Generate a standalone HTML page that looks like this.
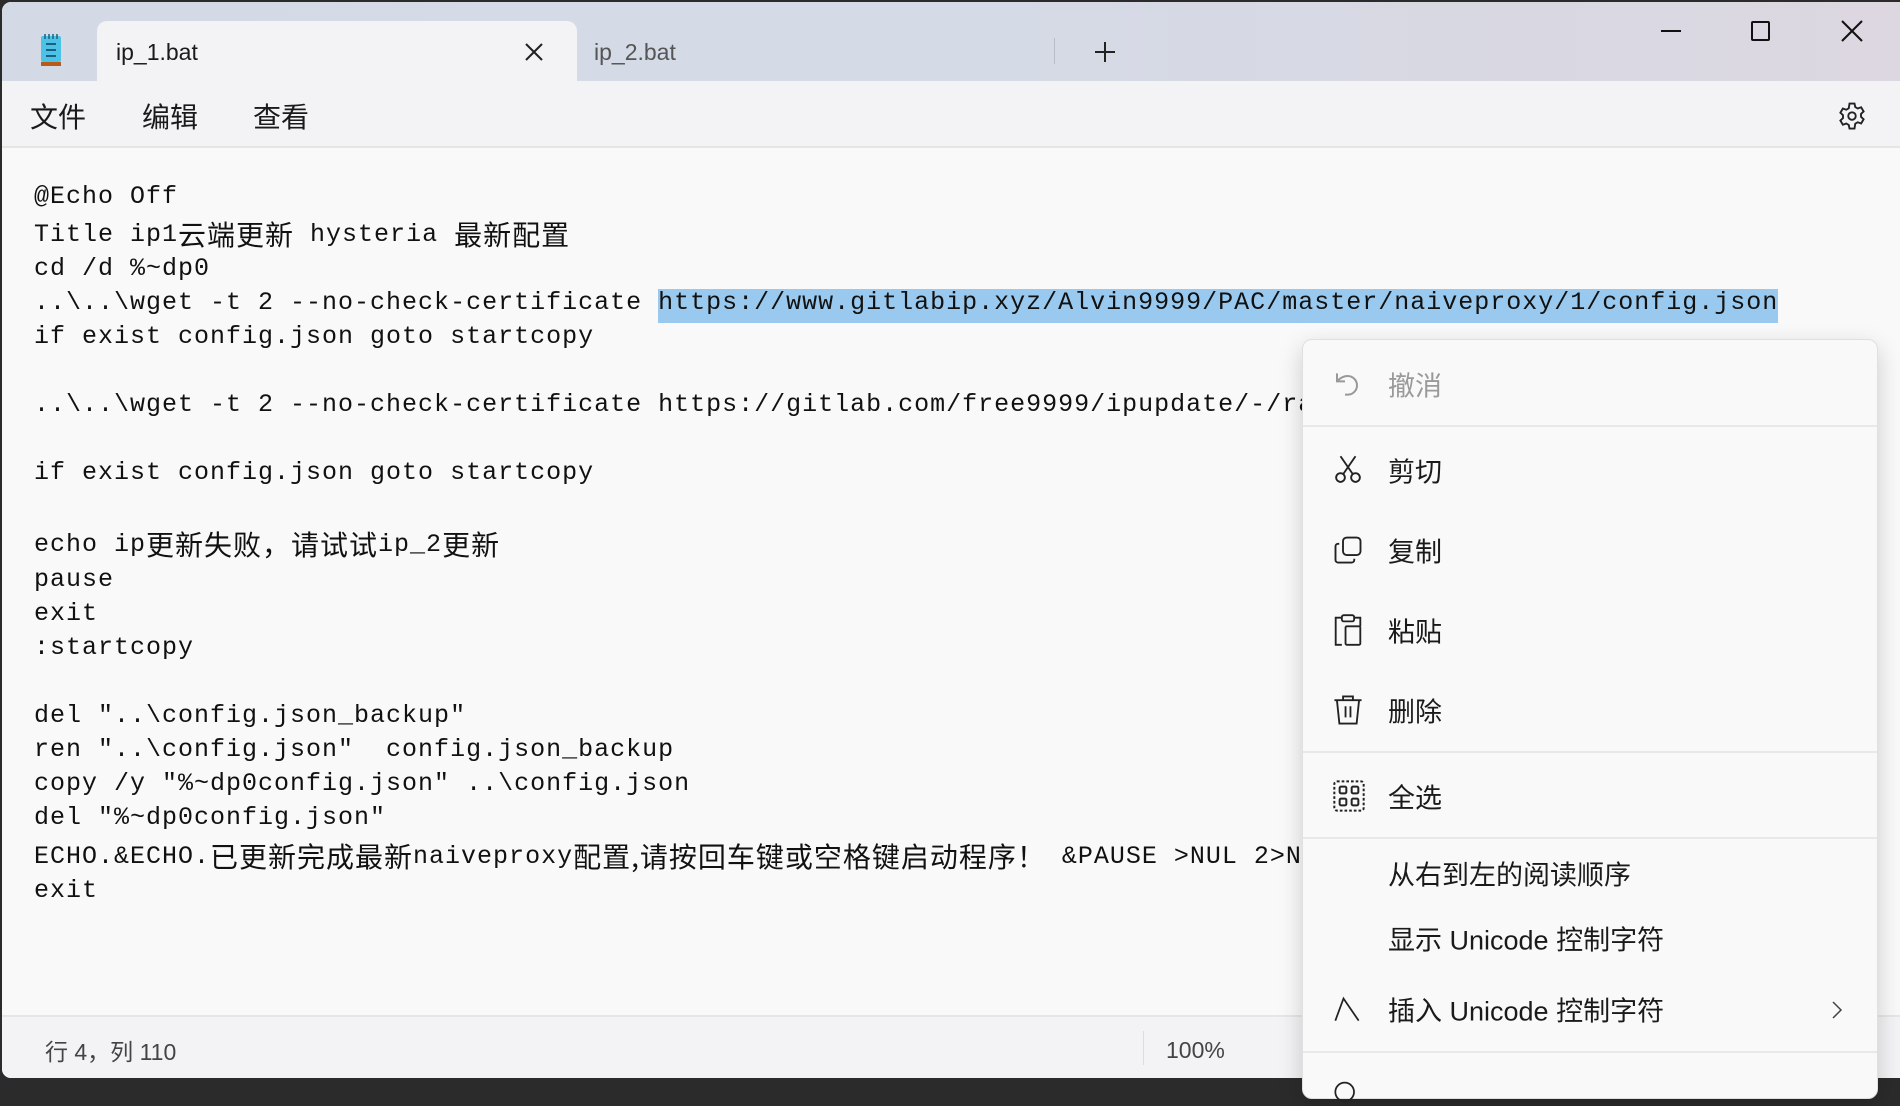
<!DOCTYPE html>
<html><head><meta charset="utf-8"><style>
*{margin:0;padding:0;box-sizing:border-box}
body{width:1900px;height:1082px;overflow:hidden;background:#2b2b2b;font-family:"Liberation Sans","Noto Sans CJK SC",sans-serif;position:relative}
.win{position:absolute;left:2px;top:2px;width:1898px;height:1076px;border-radius:9px 0 0 9px;overflow:hidden;background:#f9f9f9}
.title{position:absolute;left:0;top:0;width:100%;height:81px;background:linear-gradient(90deg,#d3dae6 0%,#d4dae6 50%,#dcd7e0 100%)}
.tab{position:absolute;left:95px;top:19px;width:480px;height:64px;background:#f3f3f5;border-radius:10px 10px 0 0}
.menu{position:absolute;left:0;top:79px;width:100%;height:67px;background:#f3f3f5;border-bottom:2px solid #e5e5e5}
.t{position:absolute;white-space:pre}
.code{position:absolute;left:32px;font-family:"Liberation Mono","Noto Sans CJK SC",monospace;font-size:25px;letter-spacing:1px;color:#111;white-space:pre;line-height:34px;height:34px}
.c{font-family:"Noto Sans CJK SC",sans-serif;font-size:28px;letter-spacing:1px;display:inline-block;height:34px;line-height:32px;vertical-align:top}
.status{position:absolute;left:0;top:1013px;width:100%;height:70px;background:#f3f3f5;border-top:2px solid #e6e6e6}
.cm{position:absolute;left:1302px;top:339px;width:576px;height:760px;background:#f9f9f9;border:1px solid #e0e0e0;border-radius:10px;box-shadow:0 8px 24px rgba(0,0,0,.18)}
.mi{position:absolute;left:85px;font-size:27px;color:#1a1a1a;white-space:pre;transform:translateY(-50%)}
.sep{position:absolute;left:0;width:100%;height:2px;background:#e8e8e8}
.ic{position:absolute;left:30px;transform:translateY(-50%)}
</style></head><body>
<div class="win">
<div class="title">
 <div class="tab"></div>
 <svg style="position:absolute;left:38px;top:32px" width="22" height="34" viewBox="0 0 22 34"><rect x="1" y="2" width="20" height="26" rx="2" fill="#4cc2e6"/><rect x="1" y="28" width="20" height="4" fill="#b75a1a"/><g stroke="#1d5f7e" stroke-width="2"><line x1="6" y1="10" x2="16" y2="10"/><line x1="6" y1="16" x2="16" y2="16"/><line x1="6" y1="22" x2="16" y2="22"/></g><g stroke="#1d5f7e" stroke-width="1.5"><line x1="5" y1="0" x2="5" y2="5"/><line x1="9" y1="0" x2="9" y2="5"/><line x1="13" y1="0" x2="13" y2="5"/><line x1="17" y1="0" x2="17" y2="5"/></g></svg>
 <div class="t" style="left:114px;top:37px;font-size:23px;color:#1a1a1a">ip_1.bat</div>
 <svg style="position:absolute;left:522px;top:40px" width="20" height="20" viewBox="0 0 20 20" stroke="#222" stroke-width="2"><line x1="2" y1="2" x2="18" y2="18"/><line x1="18" y1="2" x2="2" y2="18"/></svg>
 <div class="t" style="left:592px;top:37px;font-size:23px;color:#555">ip_2.bat</div>
 <div style="position:absolute;left:1052px;top:36px;width:1px;height:26px;background:#b8bcc6"></div>
 <svg style="position:absolute;left:1092px;top:39px" width="22" height="22" viewBox="0 0 22 22" stroke="#222" stroke-width="2"><line x1="11" y1="1" x2="11" y2="21"/><line x1="1" y1="11" x2="21" y2="11"/></svg>
 <div style="position:absolute;left:1659px;top:28px;width:20px;height:2px;background:#111"></div>
 <div style="position:absolute;left:1749px;top:19px;width:19px;height:20px;border:2px solid #111;border-radius:2px"></div>
 <svg style="position:absolute;left:1839px;top:18px" width="22" height="22" viewBox="0 0 22 22" stroke="#111" stroke-width="2"><line x1="1" y1="1" x2="21" y2="21"/><line x1="21" y1="1" x2="1" y2="21"/></svg>
</div>
<div class="menu">
 <div class="t" style="left:28px;top:15px;font-size:28px;color:#1a1a1a">文件</div>
 <div class="t" style="left:140px;top:15px;font-size:28px;color:#1a1a1a">编辑</div>
 <div class="t" style="left:251px;top:15px;font-size:28px;color:#1a1a1a">查看</div>
 <svg style="position:absolute;left:1835px;top:20px" width="30" height="30" viewBox="0 0 24 24" fill="none" stroke="#222" stroke-width="1.5"><circle cx="12" cy="12" r="3"/><path d="M10 2h4l.6 2.8 2 1.2 2.7-1 2 3.4-2.1 1.9v2.4l2.1 1.9-2 3.4-2.7-1-2 1.2L14 22h-4l-.6-2.8-2-1.2-2.7 1-2-3.4 2.1-1.9v-2.4L2.7 9.4l2-3.4 2.7 1 2-1.2z"/></svg>
</div>
<div style="position:absolute;left:656px;top:287px;width:1120px;height:34px;background:#99c9ef"></div>
<div class="code" style="top:178px">@Echo Off</div>
<div class="code" style="top:216px">Title ip1<span class="c">云端更新</span> hysteria <span class="c">最新配置</span></div>
<div class="code" style="top:250px">cd /d %~dp0</div>
<div class="code" style="top:284px">..\..\wget -t 2 --no-check-certificate https://www.gitlabip.xyz/Alvin9999/PAC/master/naiveproxy/1/config.json</div>
<div class="code" style="top:318px">if exist config.json goto startcopy</div>
<div class="code" style="top:386px">..\..\wget -t 2 --no-check-certificate https://gitlab.com/free9999/ipupdate/-/raw/master/naiveproxy/1/config.json</div>
<div class="code" style="top:454px">if exist config.json goto startcopy</div>
<div class="code" style="top:526px">echo ip<span class="c">更新失败，请试试</span>ip_2<span class="c">更新</span></div>
<div class="code" style="top:561px">pause</div>
<div class="code" style="top:595px">exit</div>
<div class="code" style="top:629px">:startcopy</div>
<div class="code" style="top:697px">del "..\config.json_backup"</div>
<div class="code" style="top:731px">ren "..\config.json"  config.json_backup</div>
<div class="code" style="top:765px">copy /y "%~dp0config.json" ..\config.json</div>
<div class="code" style="top:799px">del "%~dp0config.json"</div>
<div class="code" style="top:838px">ECHO.&amp;ECHO.<span class="c">已更新完成最新</span>naiveproxy<span class="c">配置,请按回车键或空格键启动程序！</span> &amp;PAUSE &gt;NUL 2&gt;NUL</div>
<div class="code" style="top:872px">exit</div>
<div class="status">
 <div class="t" style="left:43px;top:16px;font-size:23px;color:#444">行 4，列 110</div>
 <div style="position:absolute;left:1141px;top:14px;width:1px;height:34px;background:#ddd"></div>
 <div class="t" style="left:1164px;top:20px;font-size:23px;color:#444">100%</div>
</div>
</div>
<div class="cm">
 <svg class="ic" style="top:44px" width="32" height="32" viewBox="0 0 24 24" fill="none" stroke="#999" stroke-width="1.5"><path d="M3 4v6h6"/><path d="M3.5 9.5C6 7 8 6 11 6a7 7 0 0 1 0 14H9"/></svg>
 <div class="mi" style="top:44px;color:#9a9a9a">撤消</div>
 <div class="sep" style="top:85px"></div>
 <svg class="ic" style="top:130px" width="30" height="30" viewBox="0 0 24 24" fill="none" stroke="#222" stroke-width="1.5"><circle cx="6" cy="18" r="3.5"/><circle cx="18" cy="18" r="3.5"/><path d="M8 15.5L18 1M16 15.5L6 1"/></svg>
 <div class="mi" style="top:130px">剪切</div>
 <svg class="ic" style="top:210px" width="30" height="30" viewBox="0 0 24 24" fill="none" stroke="#222" stroke-width="1.5"><rect x="8" y="2" width="14" height="14" rx="3"/><path d="M5 7H4a2 2 0 0 0-2 2v11a2 2 0 0 0 2 2h11a2 2 0 0 0 2-2v-1"/></svg>
 <div class="mi" style="top:210px">复制</div>
 <svg class="ic" style="top:290px" width="30" height="32" viewBox="0 0 24 26" fill="none" stroke="#222" stroke-width="1.5"><path d="M7 3H2v22h5"/><rect x="7" y="1" width="10" height="5" rx="1.5"/><path d="M17 3h5v7"/><rect x="10" y="10" width="12" height="15" rx="1"/></svg>
 <div class="mi" style="top:290px">粘贴</div>
 <svg class="ic" style="top:370px" width="30" height="32" viewBox="0 0 24 26" fill="none" stroke="#222" stroke-width="1.5"><path d="M1 5h22M8 5V2h8v3M3 5l2 19h14l2-19"/><path d="M10 10v9M14 10v9"/></svg>
 <div class="mi" style="top:370px">删除</div>
 <div class="sep" style="top:411px"></div>
 <svg class="ic" style="top:456px" width="32" height="32" viewBox="0 0 24 24" fill="none" stroke="#222" stroke-width="1.5" stroke-dasharray="2 1.5"><rect x="1" y="1" width="22" height="22" rx="2"/><rect x="5" y="5" width="5" height="5" rx="1" stroke-dasharray="none"/><rect x="14" y="5" width="5" height="5" rx="1" stroke-dasharray="none"/><rect x="5" y="14" width="5" height="5" rx="1" stroke-dasharray="none"/><rect x="14" y="14" width="5" height="5" rx="1" stroke-dasharray="none"/></svg>
 <div class="mi" style="top:456px">全选</div>
 <div class="sep" style="top:497px"></div>
 <div class="mi" style="top:533px">从右到左的阅读顺序</div>
 <div class="mi" style="top:598px">显示 Unicode 控制字符</div>
 <svg class="ic" style="top:669px" width="28" height="28" viewBox="0 0 24 24" fill="none" stroke="#222" stroke-width="1.5"><path d="M2 22L9 3l13 19"/></svg>
 <div class="mi" style="top:669px">插入 Unicode 控制字符</div>
 <svg style="position:absolute;left:526px;top:660px" width="16" height="20" viewBox="0 0 16 20" fill="none" stroke="#444" stroke-width="1.5"><path d="M4 2l8 8-8 8"/></svg>
 <div class="sep" style="top:711px"></div>
 <svg style="position:absolute;left:30px;top:738px" width="28" height="28" viewBox="0 0 24 24" fill="none" stroke="#222" stroke-width="1.5"><circle cx="10" cy="12" r="8"/></svg>
</div>
</body></html>
